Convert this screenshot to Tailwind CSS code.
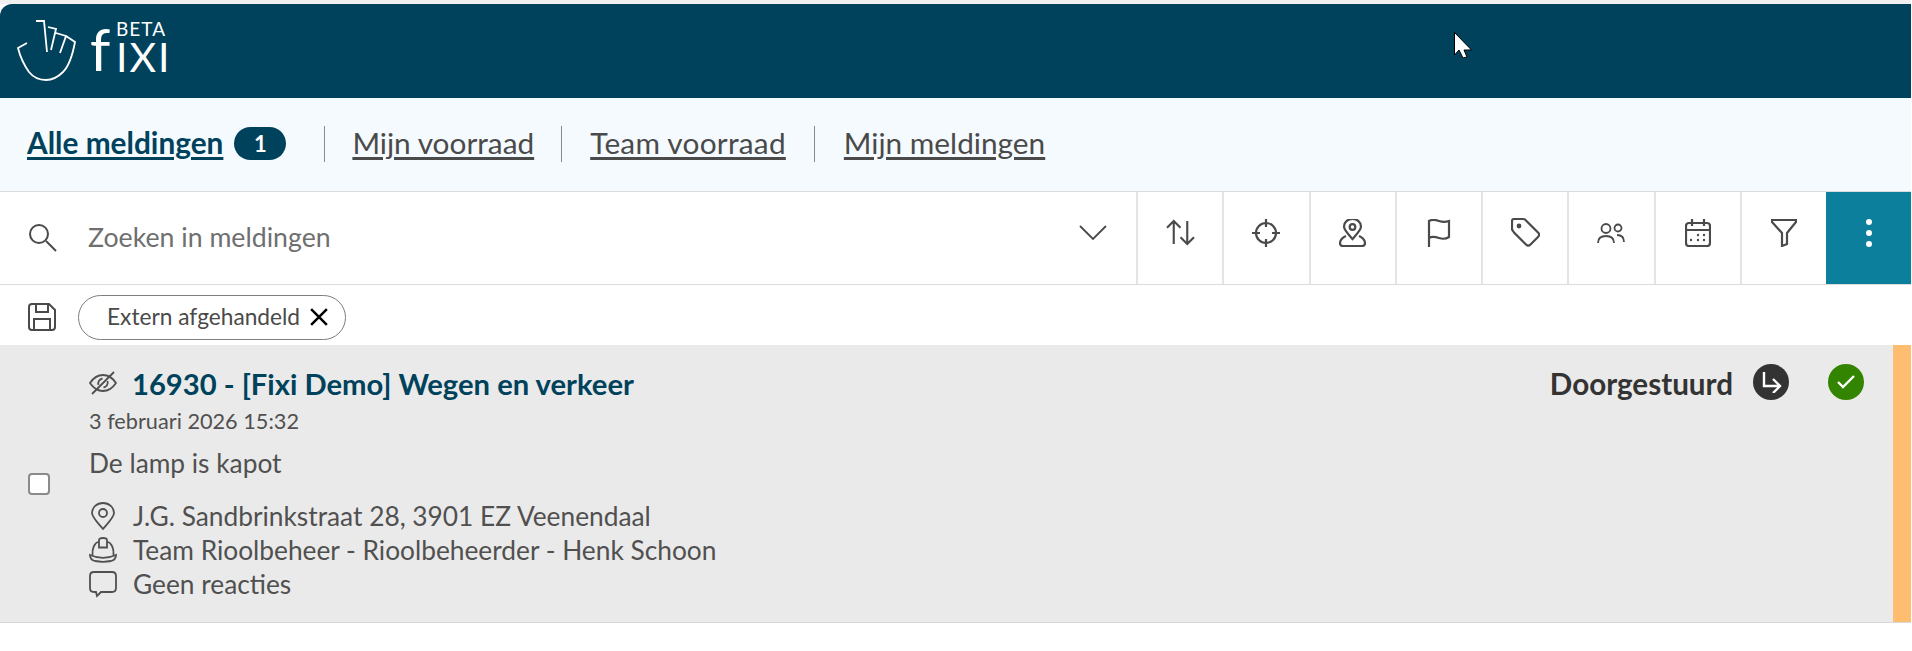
<!DOCTYPE html>
<html lang="nl">
<head>
    <meta charset="UTF-8">
    <title>Fixi meldingen</title>
    <script src="https://cdn.jsdelivr.net/npm/@tailwindcss/browser@4"></script>
</head>
<body class="bg-white h-[651px] overflow-hidden font-['Lato',sans-serif] text-[#4a4a4a] relative">
    <div class="w-[1911px]">
        <div class="h-1 bg-[#f0f0f0]"></div>

        <!-- Header -->
        <header class="h-[94px] bg-[#00425c] rounded-tl-xl flex items-center pl-[17px] text-white">
            <svg class="w-[60px] h-[62px]" viewBox="0 0 60 62" fill="none" stroke="currentColor" stroke-width="1.8">
                <path d="M19 1h8l3 31M31 7l8 2-5 21M39 13l10 3-6 17M49 16l9 6c-3 16-8 26-12 30-6 6-11 8-17 8-7 0-13-3-17-8C7 45 3 36 1 28l9-5"/>
            </svg>
            <div class="ml-[13px] flex items-end h-[62px]">
                <span class="text-[58px] leading-[48px] h-[48px] mb-[9px] w-[26px]">f</span>
                <div class="flex flex-col items-start mb-[10px]">
                    <span class="text-[19px] leading-[14px] tracking-[1px] mb-[6px]">BETA</span>
                    <span class="text-[41px] leading-[30px] h-[30px] tracking-[2px]">IXI</span>
                </div>
            </div>
        </header>

        <!-- Tabs -->
        <nav class="h-[94px] bg-[#f5faff] border-b border-[#dcdcdc] flex items-center pl-[27px] text-[29.8px] pb-[2px]">
            <a class="font-bold text-[#00425c] underline decoration-[3px] underline-offset-[3px]">Alle meldingen</a>
            <span class="ml-[11px] w-[52px] h-[33px] rounded-full bg-[#00425c] text-white text-[22px] font-bold flex items-center justify-center">1</span>
            <span class="ml-[38px] w-px h-9 bg-[#8a8a8a]"></span>
            <a class="ml-[27px] underline decoration-[3px] underline-offset-[3px]">Mijn voorraad</a>
            <span class="ml-[27px] w-px h-9 bg-[#8a8a8a]"></span>
            <a class="ml-[28px] tracking-[0.25px] underline decoration-[3px] underline-offset-[3px]">Team voorraad</a>
            <span class="ml-[28px] w-px h-9 bg-[#8a8a8a]"></span>
            <a class="ml-[29px] underline decoration-[3px] underline-offset-[3px]">Mijn meldingen</a>
        </nav>

        <!-- Search and filters -->
        <div class="h-[93px] border-b border-[#dcdcdc] flex items-stretch">
            <div class="flex-1 flex items-center pl-[27px] pb-[2px]">
                <svg class="w-[30px] h-[30px]" viewBox="0 0 30 30" fill="none" stroke="currentColor" stroke-width="2"><circle cx="12" cy="12" r="9"/><path d="M19 19l10 10"/></svg>
                <span class="ml-[31px] text-[26.700px] text-[#6f6f6f]">Zoeken in meldingen</span>
                <svg class="ml-auto mr-[29px] mb-[8px] w-[28px] h-[16px]" viewBox="0 0 28 16" fill="none" stroke="currentColor" stroke-width="1.8"><path d="M1 1l13 13L27 1"/></svg>
            </div>
            <div class="w-[86.250px] border-l-2 border-[#e4e4e4] flex items-center justify-center pb-[11px]">
                <svg class="w-[29px] h-[27px]" viewBox="0 0 30 28" fill="none" stroke="currentColor" stroke-width="2.2"><path d="M8 26V2M1 9l7-7 7 7M22 2v24M15 19l7 7 7-7"/></svg>
            </div>
            <div class="w-[86.250px] border-l-2 border-[#e4e4e4] flex items-center justify-center pb-[11px]">
                <svg class="w-[28px] h-[28px]" viewBox="0 0 28 28" fill="none" stroke="currentColor" stroke-width="2.2"><circle cx="14" cy="14" r="10"/><path d="M14 0v8M14 20v8M0 14h8M20 14h8"/></svg>
            </div>
            <div class="w-[86.250px] border-l-2 border-[#e4e4e4] flex items-center justify-center pb-[11px]">
                <svg class="w-[27px] h-[28px]" viewBox="0 0 27 28" fill="none" stroke="currentColor" stroke-width="2.2"><path d="M13.5 20C9 15 5 11 5 7.500a8.500 7.500 0 0 1 17 0C22 11 18 15 13.500 20z"/><circle cx="13.500" cy="8" r="2.800"/><path d="M7 17c-3 1-6 4-6 7 0 2 1 3 3 3h19c2 0 3-1 3-3 0-3-3-6-6-7"/></svg>
            </div>
            <div class="w-[86.250px] border-l-2 border-[#e4e4e4] flex items-center justify-center pb-[11px]">
                <svg class="w-[24px] h-[28px]" viewBox="0 0 24 28" fill="none" stroke="currentColor" stroke-width="2.2"><path d="M2 28V2c4-2 7-1 10 0s7 1 10 0v16c-3 2-7 2-10 1s-7-2-10 0"/></svg>
            </div>
            <div class="w-[86.250px] border-l-2 border-[#e4e4e4] flex items-center justify-center pb-[11px]">
                <svg class="w-[29px] h-[29px]" viewBox="0 0 29 29" fill="none" stroke="currentColor" stroke-width="2.2"><path d="M1 3c0-1 1-2 2-2h9c1 0 2 .5 3 1.500l12 12c1.500 1.500 1.500 3 0 4.500l-7.500 7.500c-1.500 1.500-3 1.500-4.500 0l-12-12C2 13 1 12 1 11z"/><circle cx="8" cy="8" r="1.300" fill="currentColor"/></svg>
            </div>
            <div class="w-[86.250px] border-l-2 border-[#e4e4e4] flex items-center justify-center pb-[11px]">
                <svg class="w-[28px] h-[20px]" viewBox="0 0 28 20" fill="none" stroke="currentColor" stroke-width="1.800"><circle cx="9" cy="5.500" r="4.500"/><path d="M1 20c0-5 3-7 8-7s8 2 8 7"/><circle cx="21" cy="5" r="3.500"/><path d="M20 12c4 0 7 2 7 7"/></svg>
            </div>
            <div class="w-[86.250px] border-l-2 border-[#e4e4e4] flex items-center justify-center pb-[11px]">
                <svg class="w-[26px] h-[28px]" viewBox="0 0 26 28" fill="none" stroke="currentColor" stroke-width="2.2"><rect x="1" y="4" width="24" height="23" rx="3"/><path d="M1 11h24M7 0v7M19 0v7"/><g fill="currentColor" stroke="none"><circle cx="6" cy="21" r="1.200"/><circle cx="13" cy="21" r="1.200"/><circle cx="13" cy="16" r="1.200"/><circle cx="19" cy="16" r="1.200"/><circle cx="19" cy="21" r="1.200"/></g></svg>
            </div>
            <div class="w-[86.250px] border-l-2 border-[#e4e4e4] flex items-center justify-center pb-[11px]">
                <svg class="w-[26px] h-[28px]" viewBox="0 0 26 28" fill="none" stroke="currentColor" stroke-width="2.2"><path d="M1 1h24v2l-9 11v11l-5 2V14L1 3z"/></svg>
            </div>
            <div class="w-[85px] bg-[#0c7f9c] flex flex-col items-center justify-center gap-[5px] pb-[11px]">
                <span class="w-1.5 h-1.5 rounded-full bg-white"></span>
                <span class="w-1.5 h-1.5 rounded-full bg-white"></span>
                <span class="w-1.5 h-1.5 rounded-full bg-white"></span>
            </div>
        </div>

        <!-- Active filters -->
        <div class="h-[60px] flex items-center pl-[28px] pt-[4px]">
            <svg class="w-[28px] h-[28px]" viewBox="0 0 28 28" fill="none" stroke="currentColor" stroke-width="2"><path d="M4 1h17l6 6v17c0 2-1 3-3 3H4c-2 0-3-1-3-3V4c0-2 1-3 3-3z"/><path d="M8 1v8h12V1M6 27V16h16v11"/></svg>
            <div class="ml-[22px] w-[268px] h-[45px] rounded-full border border-[#7d7d7d] flex items-center pl-[28px] text-[22.700px]">
                <span>Extern afgehandeld</span>
                <svg class="ml-[10px] w-[18px] h-[18px] text-black" viewBox="0 0 16 16" fill="none" stroke="currentColor" stroke-width="2.200"><path d="M1 1l14 14M15 1L1 15"/></svg>
            </div>
        </div>

        <!-- Result row -->
        <div class="h-[278px] bg-[#eaeaea] border-b border-[#d8d8d8] flex relative text-[#505050]">
            <div class="w-[89px] shrink-0 flex items-center pl-[28px]">
                <span class="w-[22px] h-[22px] bg-white rounded-[4px] border-2 border-[#8a8a8a]"></span>
            </div>
            <div class="flex-1 pt-[19px]">
                <div class="flex items-center h-[38px]">
                    <svg class="w-[28px] h-[24px]" viewBox="0 0 28 24" fill="none" stroke="currentColor" stroke-width="1.800"><path d="M1 12C5 6 9 4 14 4s9 2 13 8c-4 6-8 8-13 8S5 18 1 12z"/><path d="M9.500 14c-1-3 1-6 4-6.500M18.500 10c1 3-1 6-4 6.500M3 23L25 1"/></svg>
                    <h2 class="ml-[15px] text-[29.200px] font-bold text-[#00425c] relative top-[1px]">16930 - [Fixi Demo] Wegen en verkeer</h2>
                </div>
                <div class="text-[21.700px] leading-[30px] mt-[4px]">3 februari 2026 15:32</div>
                <div class="text-[26.300px] leading-[30px] mt-[12px]">De lamp is kapot</div>
                <div class="mt-[21px] text-[26.300px] leading-[34px]">
                    <div class="flex items-center">
                        <svg class="w-[28px] h-[28px]" viewBox="0 0 28 28" fill="none" stroke="currentColor" stroke-width="1.800"><path d="M14 27C8 20 3 15 3 11a11 10 0 0 1 22 0c0 4-5 9-11 16z"/><circle cx="14" cy="11" r="4"/></svg>
                        <span class="ml-[16px]">J.G. Sandbrinkstraat 28, 3901 EZ Veenendaal</span>
                    </div>
                    <div class="flex items-center">
                        <svg class="w-[28px] h-[26px]" viewBox="0 0 28 26" fill="none" stroke="currentColor" stroke-width="1.800"><path d="M3.500 18C3 12 5 6 10 4.500M18 4.500c5 1.500 7 7.500 6.500 13.500M10 10.500V3c0-1.500 1-2 4-2s4 .5 4 2v7.500z"/><path d="M1 18c8 3.500 18 3.500 26 0 0 3-1 5-5 6-5 1-11 1-16 0-4-1-5-3-5-6z"/></svg>
                        <span class="ml-[16px]">Team Rioolbeheer - Rioolbeheerder - Henk Schoon</span>
                    </div>
                    <div class="flex items-center">
                        <svg class="w-[28px] h-[27px]" viewBox="0 0 28 27" fill="none" stroke="currentColor" stroke-width="1.800"><path d="M5 1h18c3 0 4 1 4 4v12c0 3-1 4-4 4H12l-4 4-1-4H5c-3 0-4-1-4-4V5c0-3 1-4 4-4z"/></svg>
                        <span class="ml-[16px]">Geen reacties</span>
                    </div>
                </div>
            </div>
            <div class="flex items-start pt-[19px] pr-[29px]">
                <span class="text-[29.600px] leading-[38px] font-bold text-[#333333] relative top-[1px]">Doorgestuurd</span>
                <span class="ml-[20px] w-9 h-9 rounded-full bg-[#333333] flex items-center justify-center text-white">
                    <svg class="w-[22px] h-[22px]" viewBox="0 0 22 22" fill="none" stroke="currentColor" stroke-width="2.400"><path d="M4 1v14h15M13 8l7 7-7 7"/></svg>
                </span>
                <span class="ml-[39px] w-9 h-9 rounded-full bg-[#338400] flex items-center justify-center text-white">
                    <svg class="w-[18px] h-[14px]" viewBox="0 0 18 14" fill="none" stroke="currentColor" stroke-width="2.400"><path d="M1 7l5 5L17 1"/></svg>
                </span>
            </div>
            <div class="w-[18px] bg-[#ffbd70] shrink-0"></div>
        </div>
    </div>

    <!-- Mouse pointer in the capture -->
    <svg class="absolute left-[1454px] top-[32px] w-[18px] h-[26px]" viewBox="0 0 18 26" fill="#fff" stroke="#000" stroke-width="1"><path d="M.5.5V23L5 18l4 8 4-1-3-7h7.500z"/></svg>
</body>
</html>
